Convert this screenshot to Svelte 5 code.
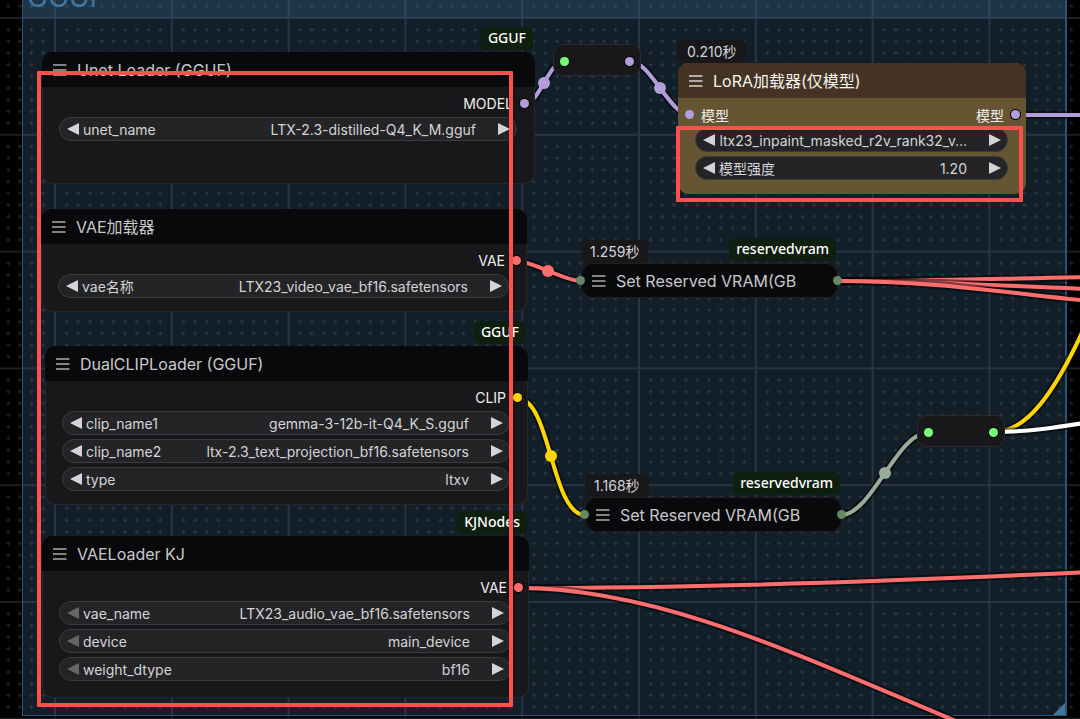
<script lang="ts">
  type Widget = {
    name: string;
    value: string;
    hideName?: boolean;
    first?: boolean;
    number?: boolean;
  };

  type GraphNode = {
    id: string;
    title: string;
    x: number;
    y: number;
    w: number;
    h: number;
    output: string;
    input?: string;
    color: string;
    badge?: string;
    time?: string;
    theme?: string;
    widgets: Widget[];
  };

  const nodes: GraphNode[] = [
    {
      id: "unet", title: "Unet Loader (GGUF)", x: 42, y: 52, w: 493, h: 132,
      output: "MODEL", color: "#b39ddb", badge: "GGUF",
      widgets: [{ name: "unet_name", value: "LTX-2.3-distilled-Q4_K_M.gguf" }],
    },
    {
      id: "vae", title: "VAE加载器", x: 41, y: 209, w: 486, h: 103,
      output: "VAE", color: "#ff6e6e",
      widgets: [{ name: "vae名称", value: "LTX23_video_vae_bf16.safetensors" }],
    },
    {
      id: "clip", title: "DualCLIPLoader (GGUF)", x: 45, y: 346, w: 483, h: 159,
      output: "CLIP", color: "#ffd500", badge: "GGUF",
      widgets: [
        { name: "clip_name1", value: "gemma-3-12b-it-Q4_K_S.gguf" },
        { name: "clip_name2", value: "ltx-2.3_text_projection_bf16.safetensors" },
        { name: "type", value: "ltxv" },
      ],
    },
    {
      id: "kj", title: "VAELoader KJ", x: 42, y: 536, w: 487, h: 162,
      output: "VAE", color: "#ff6e6e", badge: "KJNodes",
      widgets: [
        { name: "vae_name", value: "LTX23_audio_vae_bf16.safetensors", first: true },
        { name: "device", value: "main_device", first: true },
        { name: "weight_dtype", value: "bf16", first: true },
      ],
    },
    {
      id: "lora", title: "LoRA加载器(仅模型)", x: 678, y: 63, w: 348, h: 131,
      input: "模型", output: "模型", color: "#b39ddb", time: "0.210秒", theme: "brown",
      widgets: [
        { name: "LoRA", value: "ltx23_inpaint_masked_r2v_rank32_v…", hideName: true },
        { name: "模型强度", value: "1.20", number: true },
      ],
    },
  ];

  const collapsed = [
    { x: 581, y: 263, time: "1.259秒" },
    { x: 585, y: 497, time: "1.168秒" },
  ];

  const reroutes = [
    { x: 553, y: 44, out: "#b39ddb" },
    { x: 917, y: 415, out: "#77ff77" },
  ];

  const links = [
    { d: "M524 104 C540 104 548 61 565 61", color: "#b39ddb", mid: [544, 83] },
    { d: "M630 61 C650 61 670 115 690 115", color: "#b39ddb", mid: [660, 88] },
    { d: "M1015 115 L1080 115", color: "#b39ddb" },
    { d: "M516 261 C533 261 564 281 581 281", color: "#ff6e6e", mid: [548, 271] },
    { d: "M837 281 C930 281 980 279 1090 277", color: "#ff6e6e" },
    { d: "M837 281 C930 281 980 285 1090 289", color: "#ff6e6e" },
    { d: "M837 281 C930 281 1000 292 1090 301", color: "#ff6e6e" },
    { d: "M517 398 C551 398 551 515 585 515", color: "#ffd500", mid: [551, 456] },
    { d: "M841 515 C872 515 897 432 929 432", color: "#99aa99", mid: [885, 473] },
    { d: "M994 432 C1026 432 1054 395 1086 324", color: "#ffd500" },
    { d: "M994 432 C1026 432 1054 428 1090 422", color: "#ffffff" },
    { d: "M518 588 C700 588 900 581 1090 572", color: "#ff6e6e" },
    { d: "M518 588 C660 588 800 656 958 722", color: "#ff6e6e" },
  ];

  const dots = Array.from({ length: 9 }, (_, i) => (i + 1) * 11.68 + 1);
</script>

{#snippet menuIcon()}
  <svg width="14" height="12" viewBox="0 0 14 12" aria-hidden="true">
    <path d="M0 1H13.500M0 6H13.500M0 11H13.500" stroke="currentColor" stroke-width="1.500" />
  </svg>
{/snippet}

{#snippet arrow(d)}
  <svg width="12" height="12" viewBox="0 0 12 12" aria-hidden="true">
    <path {d} fill="currentColor" />
  </svg>
{/snippet}

<main class="graph">
  <svg class="layer" aria-hidden="true">
    <defs>
      <pattern id="grid" x="54" y="17" width="116.8" height="116.8" patternUnits="userSpaceOnUse">
        <path d="M1 0V116.8M0 1H116.8" stroke="#1e1e22" stroke-width="2" />
        {#each dots as y}
          {#each dots as x}
            <path d="M{x - 2} {y}h4M{x} {y - 2}v4" stroke="#232328" stroke-width="1.200" />
          {/each}
        {/each}
      </pattern>
    </defs>
    <rect width="100%" height="100%" fill="url(#grid)" />
  </svg>

  <section class="group">
    <h1>GGUF</h1>
    <svg class="resize" width="12" height="12" viewBox="0 0 12 12" aria-hidden="true">
      <path d="M12 0V12H0Z" fill="#3f789e" />
    </svg>
  </section>

  <svg class="layer" aria-hidden="true">
    {#each links as link}
      <path d={link.d} fill="none" stroke="#000" stroke-opacity="0.5" stroke-width="8" />
      <path d={link.d} fill="none" stroke={link.color} stroke-width="4" />
      {#if link.mid}
        <circle cx={link.mid[0]} cy={link.mid[1]} r="6" fill={link.color} />
      {/if}
    {/each}
  </svg>

  {#each nodes as node}
    <article
      class="node {node.theme ?? ''}"
      style="left: {node.x}px; top: {node.y}px; width: {node.w}px; min-height: {node.h}px"
    >
      {#if node.time}<span class="time">{node.time}</span>{/if}
      {#if node.badge}<span class="badge">{node.badge}</span>{/if}
      <header>
        <button class="menu" aria-label="Collapse">{@render menuIcon()}</button>
        <h2>{node.title}</h2>
      </header>
      <div class="slots">
        {#if node.input}
          <i class="dot" style="background: {node.color}"></i>
          <span>{node.input}</span>
        {/if}
        <span class="output">{node.output}</span>
        <i class="dot ring" style="background: {node.color}"></i>
      </div>
      <div class="widgets">
        {#each node.widgets as widget, i}
          <div class="widget">
            <button aria-label="Previous" disabled={widget.first}>
              {@render arrow("M12 0V12L0 6Z")}
            </button>
            {#if !widget.hideName}
              <label for="{node.id}-{i}">{widget.name}</label>
            {/if}
            {#if widget.number}
              <input id="{node.id}-{i}" type="text" value={widget.value} />
            {:else}
              <select id="{node.id}-{i}" aria-label={widget.name}>
                <option>{widget.value}</option>
              </select>
            {/if}
            <button aria-label="Next">{@render arrow("M0 0V12L12 6Z")}</button>
          </div>
        {/each}
      </div>
    </article>
  {/each}

  {#each collapsed as node}
    <article class="node collapsed" style="left: {node.x}px; top: {node.y}px">
      <span class="time">{node.time}</span>
      <span class="badge">reservedvram</span>
      <header>
        <button class="menu" aria-label="Expand">{@render menuIcon()}</button>
        <h2>Set Reserved VRAM(GB</h2>
      </header>
      <i class="end start"></i>
      <i class="end"></i>
    </article>
  {/each}

  {#each reroutes as node}
    <div class="reroute" style="left: {node.x}px; top: {node.y}px">
      <i class="dot"></i>
      <i class="dot ring" style="background: {node.out}"></i>
    </div>
  {/each}

  <div class="mark loaders"></div>
  <div class="mark lora"></div>
</main>

<style>
  :global(body) {
    margin: 0;
    background: #000;
  }
  .graph {
    position: relative;
    min-height: 100vh;
    overflow: hidden;
    background: #000;
    font-family: Inter, "Noto Sans CJK SC", sans-serif;
    font-size: 14px;
    color: #d4d4d8;
  }
  .layer {
    position: absolute;
    inset: 0;
    width: 100%;
    height: 100%;
  }
  .group {
    position: absolute;
    left: 22px;
    top: -18px;
    width: 1042px;
    height: 732px;
    border: 1px solid #2b5575;
    border-right-width: 2px;
    background: rgba(68, 120, 158, 0.26);
  }
  h1 {
    margin: 0;
    height: 35px;
    padding-left: 4px;
    font-size: 28px;
    line-height: 28px;
    font-weight: 400;
    color: #3f789e;
    background: rgba(63, 120, 158, 0.25);
  }
  .resize {
    position: absolute;
    right: 0;
    bottom: 0;
  }
  .node {
    position: absolute;
    box-sizing: border-box;
    border-radius: 11px;
    background: #18181a;
    box-shadow: inset 0 0 0 1px #27272b;
  }
  header {
    display: flex;
    align-items: center;
    gap: 10px;
    box-sizing: border-box;
    height: 35px;
    padding: 0 11px;
    border-radius: 11px 11px 0 0;
    background: #09090b;
  }
  h2 {
    margin: 0;
    font-size: 16px;
    line-height: 24px;
    font-weight: 400;
    white-space: nowrap;
    color: #c8c8cb;
  }
  button {
    display: flex;
    padding: 0;
    border: none;
    background: none;
    color: #d4d4d8;
    cursor: pointer;
  }
  button:disabled {
    color: #666;
  }
  .menu {
    color: #aaa;
  }
  .slots {
    display: flex;
    align-items: center;
    gap: 7px;
    height: 27px;
    padding: 3px 6px 0 7px;
    color: #eeeef0;
  }
  .output {
    margin-left: auto;
  }
  .dot {
    width: 9px;
    height: 9px;
    border-radius: 50%;
    background: #77ff77;
  }
  .ring {
    box-shadow: 0 0 0 1px #09090b;
  }
  .widgets {
    display: flex;
    flex-direction: column;
    gap: 4px;
    padding: 0 18px 0 17px;
  }
  .widget {
    display: flex;
    align-items: center;
    box-sizing: border-box;
    height: 24px;
    padding: 0 6px 0 7px;
    border: 1px solid #3a3a40;
    border-radius: 12px;
    background: #242426;
  }
  label {
    margin-left: 4px;
  }
  select,
  input {
    flex: 1;
    min-width: 0;
    margin: 0 22px 0 4px;
    padding: 0;
    border: none;
    outline: none;
    appearance: none;
    background: none;
    font: inherit;
    color: inherit;
    text-align: right;
    text-align-last: right;
  }
  .brown {
    background: #665533;
    box-shadow: none;
  }
  .brown header {
    background: #443322;
  }
  .brown h2 {
    color: #f4f4f4;
  }
  .brown .menu {
    color: #d4d4d8;
  }
  .time,
  .badge {
    position: absolute;
    height: 23px;
    line-height: 23px;
    border-radius: 5px;
    white-space: nowrap;
  }
  .time {
    left: 0;
    bottom: 100%;
    padding: 0 9px;
    background: #18181b;
  }
  .badge {
    right: 2px;
    top: -25px;
    padding: 0 7px;
    font-family: "Noto Sans", sans-serif;
    font-weight: 500;
    line-height: 22px;
    color: #fff;
    background: #0f1f0f;
  }
  .collapsed {
    width: 257px;
  }
  .collapsed header {
    border-radius: 12px;
    box-shadow: inset 0 0 0 1px #1f1f22;
  }
  .end {
    position: absolute;
    right: -4px;
    top: 13px;
    width: 9px;
    height: 9px;
    border-radius: 50%;
    background: #668866;
  }
  .start {
    right: auto;
    left: -5px;
  }
  .reroute {
    position: absolute;
    display: flex;
    align-items: center;
    justify-content: space-between;
    box-sizing: border-box;
    width: 88px;
    height: 32px;
    padding: 2px 6px 0;
    border: 1px solid #2b2b30;
    border-radius: 10px;
    background: #18181a;
  }
  .mark {
    position: absolute;
    box-sizing: border-box;
    border: 4px solid #ff5050;
    border-radius: 1px;
    pointer-events: none;
  }
  .loaders {
    left: 37px;
    top: 71px;
    width: 476px;
    height: 636px;
  }
  .lora {
    left: 676px;
    top: 126px;
    width: 347px;
    height: 76px;
  }
</style>
